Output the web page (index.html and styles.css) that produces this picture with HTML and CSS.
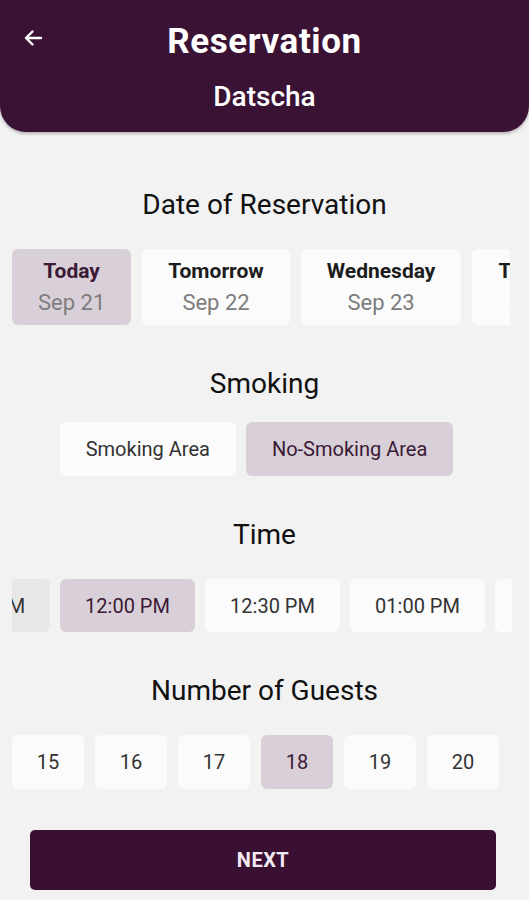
FILE: index.html
```html
<!DOCTYPE html>
<html>
<head>
  <meta charset="UTF-8">
  <meta name="viewport" content="width=device-width, initial-scale=1.0">
  <title>Reservation</title>
  <link rel="stylesheet" href="styles.css">
</head>
<body>
  <div class="header">
    <div class="back">
      <svg width="20" height="18" viewBox="0 0 20 18"><path d="M18 9H3M9.5 2.5L3 9l6.5 6.5" fill="none" stroke="#fff" stroke-width="2.4" stroke-linecap="round" stroke-linejoin="round"/></svg>
    </div>
    <div class="titles">
      <div class="title">Reservation</div>
      <div class="subtitle">Datscha</div>
    </div>
    <div></div>
  </div>

  <div class="section first">
    <h2>Date of Reservation</h2>
    <div class="row dates">
      <div class="card date selected"><b>Today</b><span>Sep 21</span></div>
      <div class="card date"><b>Tomorrow</b><span>Sep 22</span></div>
      <div class="card date"><b>Wednesday</b><span>Sep 23</span></div>
      <div class="card date"><b>Thursday</b><span>Sep 24</span></div>
    </div>
  </div>

  <div class="section">
    <h2 class="tight">Smoking</h2>
    <div class="row center">
      <div class="card opt">Smoking Area</div>
      <div class="card opt selected">No-Smoking Area</div>
    </div>
  </div>

  <div class="section">
    <h2>Time</h2>
    <div class="row">
      <div class="card time edge">11:30 AM</div>
      <div class="card time selected">12:00 PM</div>
      <div class="card time">12:30 PM</div>
      <div class="card time">01:00 PM</div>
      <div class="card time">01:30 PM</div>
    </div>
  </div>

  <div class="section">
    <h2>Number of Guests</h2>
    <div class="row guests">
      <div class="card num">15</div>
      <div class="card num">16</div>
      <div class="card num">17</div>
      <div class="card num selected">18</div>
      <div class="card num">19</div>
      <div class="card num">20</div>
    </div>
  </div>

  <button class="next">NEXT</button>
</body>
</html>
```

FILE: styles.css
```css
/* Page */
body {
  margin: 0;
  background: #f2f2f2;
  font-family: Roboto, "Liberation Sans", sans-serif;
  color: #1a1a1a;
}

/* Header */
.header {
  display: grid;
  grid-template-columns: 56px 1fr 56px;
  height: 132px;
  background: #3a1233;
  border-bottom-left-radius: 26px;
  border-bottom-right-radius: 26px;
  box-shadow: 0 2px 3px rgba(0, 0, 0, 0.25);
  color: #fff;
}
.back {
  padding: 29px 0 0 23px;
}
.titles {
  text-align: center;
  padding-top: 22px;
}
.title {
  font-size: 35px;
  font-weight: 700;
  line-height: 40px;
  letter-spacing: 0.6px;
}
.subtitle {
  margin-top: 20px;
  font-size: 28px;
  font-weight: 500;
  line-height: 30px;
}

/* Sections */
.section {
  margin-top: 44px;
}
.section.first {
  margin-top: 58px;
}
h2 {
  margin: 0 0 29px;
  text-align: center;
  font-size: 28px;
  font-weight: 400;
  line-height: 30px;
  color: #111;
}
h2.tight {
  margin-bottom: 23px;
}

.row {
  display: flex;
  gap: 10px;
  margin: 0 17px 0 12px;
  overflow: hidden;
}
.row.dates {
  gap: 11px;
  margin-right: 19px;
}
.row.center {
  justify-content: center;
  margin: 0 0 0 50px;
  padding-right: 66px;
}
.row.guests {
  gap: 11px;
}

.card {
  flex: none;
  background: #fbfbfb;
  border-radius: 6px;
  box-sizing: border-box;
  display: flex;
  align-items: center;
  justify-content: center;
  color: #333;
}
.card.selected {
  background: #d9cfd8;
  color: #3a1a35;
}

.date {
  flex-direction: column;
  height: 76px;
  min-width: 118px;
  padding: 0 26px;
}
.date b {
  font-size: 21px;
  font-weight: 700;
  line-height: 24px;
  color: #1c1c1c;
}
.date.selected b {
  color: #3a1a35;
}
.date span {
  margin-top: 7px;
  font-size: 22px;
  color: #7d7d7d;
}

.opt {
  height: 54px;
  padding: 0 26px;
  font-size: 20px;
}

.time {
  height: 53px;
  width: 135px;
  font-size: 20px;
}
.time.edge {
  margin-left: -97px;
  background: #e7e7e7;
}

.num {
  width: 72px;
  height: 54px;
  font-size: 20px;
}

/* Button */
.next {
  display: block;
  margin: 41px 0 0 30px;
  width: 466px;
  height: 60px;
  border: none;
  border-radius: 5px;
  background: #3a1032;
  color: #f3e9f1;
  font-family: Roboto, "Liberation Sans", sans-serif;
  font-size: 20px;
  font-weight: 700;
  letter-spacing: 0.5px;
}
```
